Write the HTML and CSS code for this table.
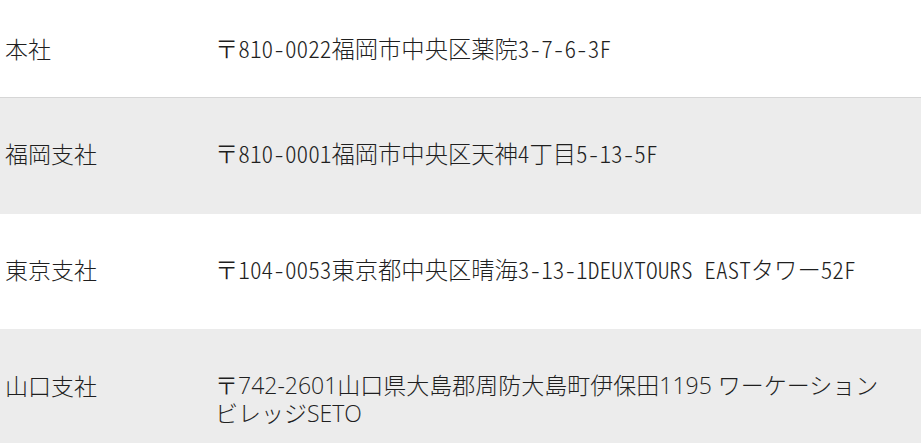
FILE: index.html
```html
<!DOCTYPE html>
<html lang="ja">
<head>
<meta charset="utf-8">
<title>拠点一覧</title>
<link rel="stylesheet" href="styles.css">
</head>
<body>
<div class="offices">
  <div class="row row-first">
    <div class="name">本社</div>
    <div class="addr mincho">〒810-0022福岡市中央区薬院3-7-6-3F</div>
  </div>
  <div class="row row-gray">
    <div class="name">福岡支社</div>
    <div class="addr mincho">〒810-0001福岡市中央区天神4丁目5-13-5F</div>
  </div>
  <div class="row row-white">
    <div class="name">東京支社</div>
    <div class="addr mincho">〒104-0053東京都中央区晴海3-13-1DEUXTOURS　EASTタワー52F</div>
  </div>
  <div class="row row-gray">
    <div class="name">山口支社</div>
    <div class="addr gothic">〒742-2601山口県大島郡周防大島町伊保田1195 ワーケーションビレッジSETO</div>
  </div>
</div>
</body>
</html>
```

FILE: styles.css
```css
html, body {
  margin: 0;
  padding: 0;
  background: #ffffff;
}

body {
  font-family: "Noto Sans CJK JP", "Noto Sans", sans-serif;
  color: #1f1f1f;
  font-size: 23px;
  line-height: 28px;
}

.offices {
  display: flex;
  flex-direction: column;
}

.row {
  display: grid;
  grid-template-columns: 210px 1fr;
  padding: 41px 31px 46px 5px;
  border-bottom: 1px solid transparent;
}

.row-first {
  padding-top: 34px;
  padding-bottom: 35px;
  border-bottom: 1px solid #d6d6d6;
  background: #ffffff;
}

.row-gray {
  background: #ececec;
  border-bottom-color: #ececec;
}

.row-white {
  background: #ffffff;
  border-bottom-color: #ebebeb;
}

.name {
  font-weight: 300;
}

.mincho {
  font-family: "Noto Sans CJK JP", sans-serif;
  font-feature-settings: "hwid" 1;
  font-weight: 300;
  font-size: 23.3px;
}

.gothic {
  font-family: "Open Sans", "Noto Sans CJK JP", sans-serif;
  font-weight: 300;
}
```
